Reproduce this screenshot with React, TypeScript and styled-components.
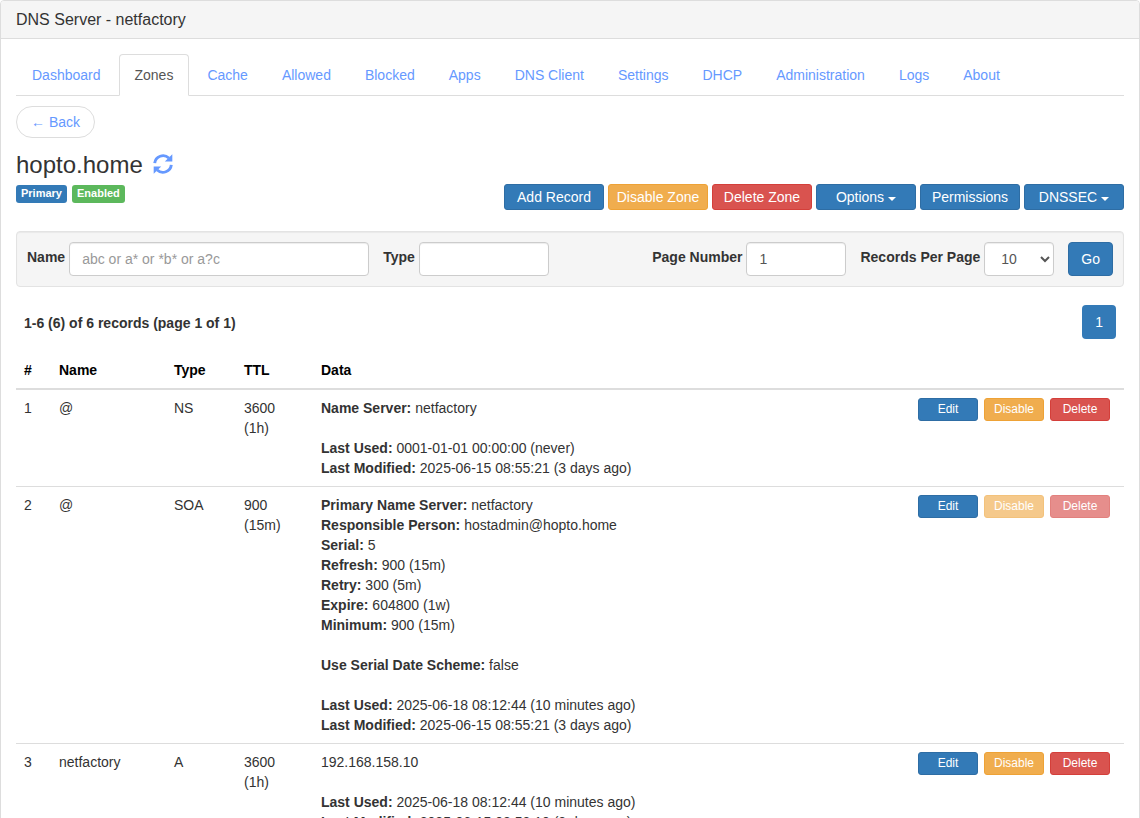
import React from "react";
import styled, { createGlobalStyle, css } from "styled-components";

const GlobalStyle = createGlobalStyle`
  *, *::before, *::after { box-sizing: border-box; }
  body {
    margin: 0;
    background: #fff;
    color: #333;
    font: 14px/20px Arial, "Liberation Sans", sans-serif;
  }
  button, input, select { font: inherit; margin: 0; }
`;

const Panel = styled.main`
  border: 1px solid #ddd;
  border-radius: 4px;
`;

const PanelHeader = styled.header`
  padding: 10px 15px;
  background: #f5f5f5;
  border-bottom: 1px solid #ddd;
  border-radius: 3px 3px 0 0;
`;

const PanelTitle = styled.h1`
  margin: 0;
  font-size: 16px;
  line-height: 17px;
  font-weight: 400;
`;

const PanelBody = styled.div`
  padding: 15px;
`;

const Tabs = styled.nav`
  display: flex;
  gap: 2px;
  border-bottom: 1px solid #ddd;
`;

const Tab = styled.a<{ $active?: boolean }>`
  margin-bottom: -1px;
  padding: 10px 15px;
  border: 1px solid transparent;
  border-radius: 4px 4px 0 0;
  color: #6699ff;
  text-decoration: none;
  ${(p) =>
    p.$active &&
    css`
      color: #555;
      background: #fff;
      border-color: #ddd #ddd #fff;
    `}
`;

const BackLink = styled.a`
  display: inline-block;
  margin-top: 10px;
  padding: 5px 14px;
  border: 1px solid #ddd;
  border-radius: 16px;
  color: #6699ff;
  text-decoration: none;
`;

const ZoneTitle = styled.div`
  display: flex;
  align-items: center;
  gap: 10px;
  margin-top: 12px;
`;

const ZoneName = styled.h2`
  margin: 0;
  font-size: 24px;
  line-height: 30px;
  font-weight: 400;
`;

const RefreshButton = styled.button`
  display: flex;
  padding: 0 0 2px;
  border: 0;
  background: none;
  color: #6699ff;
  cursor: pointer;
`;

const ZoneBar = styled.div`
  display: flex;
  justify-content: space-between;
  align-items: flex-start;
  margin-top: 4px;
`;

const Group = styled.div<{ $gap: number }>`
  display: flex;
  gap: ${(p) => p.$gap}px;
`;

const Badge = styled.span<{ $color: string }>`
  margin-top: 1px;
  padding: 0 5px 2px;
  border-radius: 3px;
  background: ${(p) => p.$color};
  color: #fff;
  font-size: 11px;
  line-height: 16px;
  font-weight: 700;
`;

const tones = {
  primary: ["#337ab7", "#2e6da4"],
  warning: ["#f0ad4e", "#eea236"],
  danger: ["#d9534f", "#d43f3a"],
};

const Button = styled.button<{ $tone: keyof typeof tones }>`
  padding: 6px 12px;
  border: 1px solid ${(p) => tones[p.$tone][1]};
  border-radius: 4px;
  background: ${(p) => tones[p.$tone][0]};
  color: #fff;
  white-space: nowrap;
  cursor: pointer;
  &:disabled { opacity: 0.65; cursor: not-allowed; }
`;

const ZoneButton = styled(Button)`
  width: 100px;
  padding: 2px 0;
  border-radius: 3px;
`;

const RowButton = styled(Button)`
  width: 60px;
  padding: 2px 0 3px;
  border-radius: 3px;
  font-size: 12px;
  line-height: 16px;
`;

const Caret = styled.span`
  display: inline-block;
  margin: 2px 0 0 4px;
  vertical-align: middle;
  border-top: 4px solid;
  border-right: 4px solid transparent;
  border-left: 4px solid transparent;
`;

const FilterBar = styled.form`
  display: flex;
  align-items: center;
  gap: 14px;
  margin-top: 21px;
  padding: 10px;
  background: #f5f5f5;
  border: 1px solid #e3e3e3;
  border-radius: 4px;
  box-shadow: inset 0 1px 1px rgba(0, 0, 0, 0.05);
`;

const Field = styled.div<{ $end?: boolean }>`
  display: flex;
  align-items: center;
  gap: 4px;
  margin-left: ${(p) => (p.$end ? "auto" : 0)};
`;

const FieldLabel = styled.label`
  padding-bottom: 4px;
  font-weight: 700;
  white-space: nowrap;
`;

const control = css<{ $width: number }>`
  width: ${(p) => p.$width}px;
  height: 34px;
  padding: 6px 12px;
  border: 1px solid #ccc;
  border-radius: 4px;
  background-color: #fff;
  color: #555;
  box-shadow: inset 0 1px 1px rgba(0, 0, 0, 0.075);
`;

const TextInput = styled.input<{ $width: number }>`
  ${control}
  &::placeholder { color: #999; opacity: 1; }
`;

const Select = styled.select<{ $width: number }>`
  ${control}
`;

const Summary = styled.div`
  display: flex;
  justify-content: space-between;
  align-items: center;
  margin-top: 18px;
  padding: 0 8px;
  font-weight: 700;
`;

const SummaryText = styled.span`
  padding-top: 2px;
`;

const PageLink = styled.a`
  padding: 7px 13px;
  border-radius: 4px;
  background: #337ab7;
  color: #fff;
  font-weight: 400;
  text-decoration: none;
`;

const Table = styled.table`
  width: 100%;
  margin-top: 13px;
  border-collapse: collapse;
  table-layout: fixed;
`;

const Th = styled.th<{ $width?: number }>`
  width: ${(p) => (p.$width ? `${p.$width}px` : "auto")};
  padding: 8px;
  border-bottom: 2px solid #ddd;
  color: #000;
  text-align: left;
`;

const Td = styled.td`
  padding: 8px;
  border-top: 1px solid #ddd;
  vertical-align: top;
`;

const Detail = styled.div`
  min-height: 20px;
`;

const tabs = [
  "Dashboard", "Zones", "Cache", "Allowed", "Blocked", "Apps", "DNS Client",
  "Settings", "DHCP", "Administration", "Logs", "About",
];

type Line = [label: string, value: string];

const records: { name: string; type: string; ttl: string; span: string; locked?: boolean; data: Line[] }[] = [
  {
    name: "@", type: "NS", ttl: "3600", span: "(1h)",
    data: [
      ["Name Server:", "netfactory"],
      ["", ""],
      ["Last Used:", "0001-01-01 00:00:00 (never)"],
      ["Last Modified:", "2025-06-15 08:55:21 (3 days ago)"],
    ],
  },
  {
    name: "@", type: "SOA", ttl: "900", span: "(15m)", locked: true,
    data: [
      ["Primary Name Server:", "netfactory"],
      ["Responsible Person:", "hostadmin@hopto.home"],
      ["Serial:", "5"],
      ["Refresh:", "900 (15m)"],
      ["Retry:", "300 (5m)"],
      ["Expire:", "604800 (1w)"],
      ["Minimum:", "900 (15m)"],
      ["", ""],
      ["Use Serial Date Scheme:", "false"],
      ["", ""],
      ["Last Used:", "2025-06-18 08:12:44 (10 minutes ago)"],
      ["Last Modified:", "2025-06-15 08:55:21 (3 days ago)"],
    ],
  },
  {
    name: "netfactory", type: "A", ttl: "3600", span: "(1h)",
    data: [
      ["", "192.168.158.10"],
      ["", ""],
      ["Last Used:", "2025-06-18 08:12:44 (10 minutes ago)"],
      ["Last Modified:", "2025-06-15 08:53:10 (3 days ago)"],
    ],
  },
];

function RefreshIcon() {
  return (
    <svg width="20" height="20" viewBox="0 0 20 20" aria-hidden="true">
      <g fill="none" stroke="currentColor" strokeWidth="2.9">
        <path d="M1.7 9.2A8.4 8.4 0 0 1 15.8 4" />
        <path d="M18.3 10.8A8.4 8.4 0 0 1 4.2 16" />
      </g>
      <g fill="currentColor">
        <path d="M19.3 0.3V7.5H11.8Z" />
        <path d="M0.7 19.7V12.5H8.2Z" />
      </g>
    </svg>
  );
}

export default function App() {
  return (
    <>
      <GlobalStyle />
      <Panel>
        <PanelHeader>
          <PanelTitle>DNS Server - netfactory</PanelTitle>
        </PanelHeader>
        <PanelBody>
          <Tabs>
            {tabs.map((t) => (
              <Tab key={t} href="#" $active={t === "Zones"}>{t}</Tab>
            ))}
          </Tabs>
          <BackLink href="#">← Back</BackLink>
          <ZoneTitle>
            <ZoneName>hopto.home</ZoneName>
            <RefreshButton type="button" aria-label="Refresh"><RefreshIcon /></RefreshButton>
          </ZoneTitle>
          <ZoneBar>
            <Group $gap={5}>
              <Badge $color="#337ab7">Primary</Badge>
              <Badge $color="#5cb85c">Enabled</Badge>
            </Group>
            <Group $gap={4}>
              <ZoneButton type="button" $tone="primary">Add Record</ZoneButton>
              <ZoneButton type="button" $tone="warning">Disable Zone</ZoneButton>
              <ZoneButton type="button" $tone="danger">Delete Zone</ZoneButton>
              <ZoneButton type="button" $tone="primary">Options<Caret /></ZoneButton>
              <ZoneButton type="button" $tone="primary">Permissions</ZoneButton>
              <ZoneButton type="button" $tone="primary">DNSSEC<Caret /></ZoneButton>
            </Group>
          </ZoneBar>
          <FilterBar onSubmit={(e) => e.preventDefault()}>
            <Field>
              <FieldLabel htmlFor="name">Name</FieldLabel>
              <TextInput id="name" $width={300} placeholder="abc or a* or *b* or a?c" />
            </Field>
            <Field>
              <FieldLabel htmlFor="type">Type</FieldLabel>
              <TextInput id="type" $width={130} />
            </Field>
            <Field $end>
              <FieldLabel htmlFor="page">Page Number</FieldLabel>
              <TextInput id="page" $width={100} defaultValue="1" />
            </Field>
            <Field>
              <FieldLabel htmlFor="perPage">Records Per Page</FieldLabel>
              <Select id="perPage" $width={70} defaultValue="10">
                <option>10</option>
                <option>25</option>
                <option>50</option>
              </Select>
            </Field>
            <Button type="submit" $tone="primary">Go</Button>
          </FilterBar>
          <Summary>
            <SummaryText>1-6 (6) of 6 records (page 1 of 1)</SummaryText>
            <PageLink href="#">1</PageLink>
          </Summary>
          <Table>
            <thead>
              <tr>
                <Th $width={35}>#</Th>
                <Th $width={115}>Name</Th>
                <Th $width={70}>Type</Th>
                <Th $width={77}>TTL</Th>
                <Th>Data</Th>
                <Th $width={214} aria-label="Actions" />
              </tr>
            </thead>
            <tbody>
              {records.map((r, i) => (
                <tr key={i}>
                  <Td>{i + 1}</Td>
                  <Td>{r.name}</Td>
                  <Td>{r.type}</Td>
                  <Td>{r.ttl}<br />{r.span}</Td>
                  <Td>
                    {r.data.map(([label, value], j) => (
                      <Detail key={j}>{label && <b>{label}</b>} {value}</Detail>
                    ))}
                  </Td>
                  <Td>
                    <Group $gap={6}>
                      <RowButton type="button" $tone="primary">Edit</RowButton>
                      <RowButton type="button" $tone="warning" disabled={r.locked}>Disable</RowButton>
                      <RowButton type="button" $tone="danger" disabled={r.locked}>Delete</RowButton>
                    </Group>
                  </Td>
                </tr>
              ))}
            </tbody>
          </Table>
        </PanelBody>
      </Panel>
    </>
  );
}
